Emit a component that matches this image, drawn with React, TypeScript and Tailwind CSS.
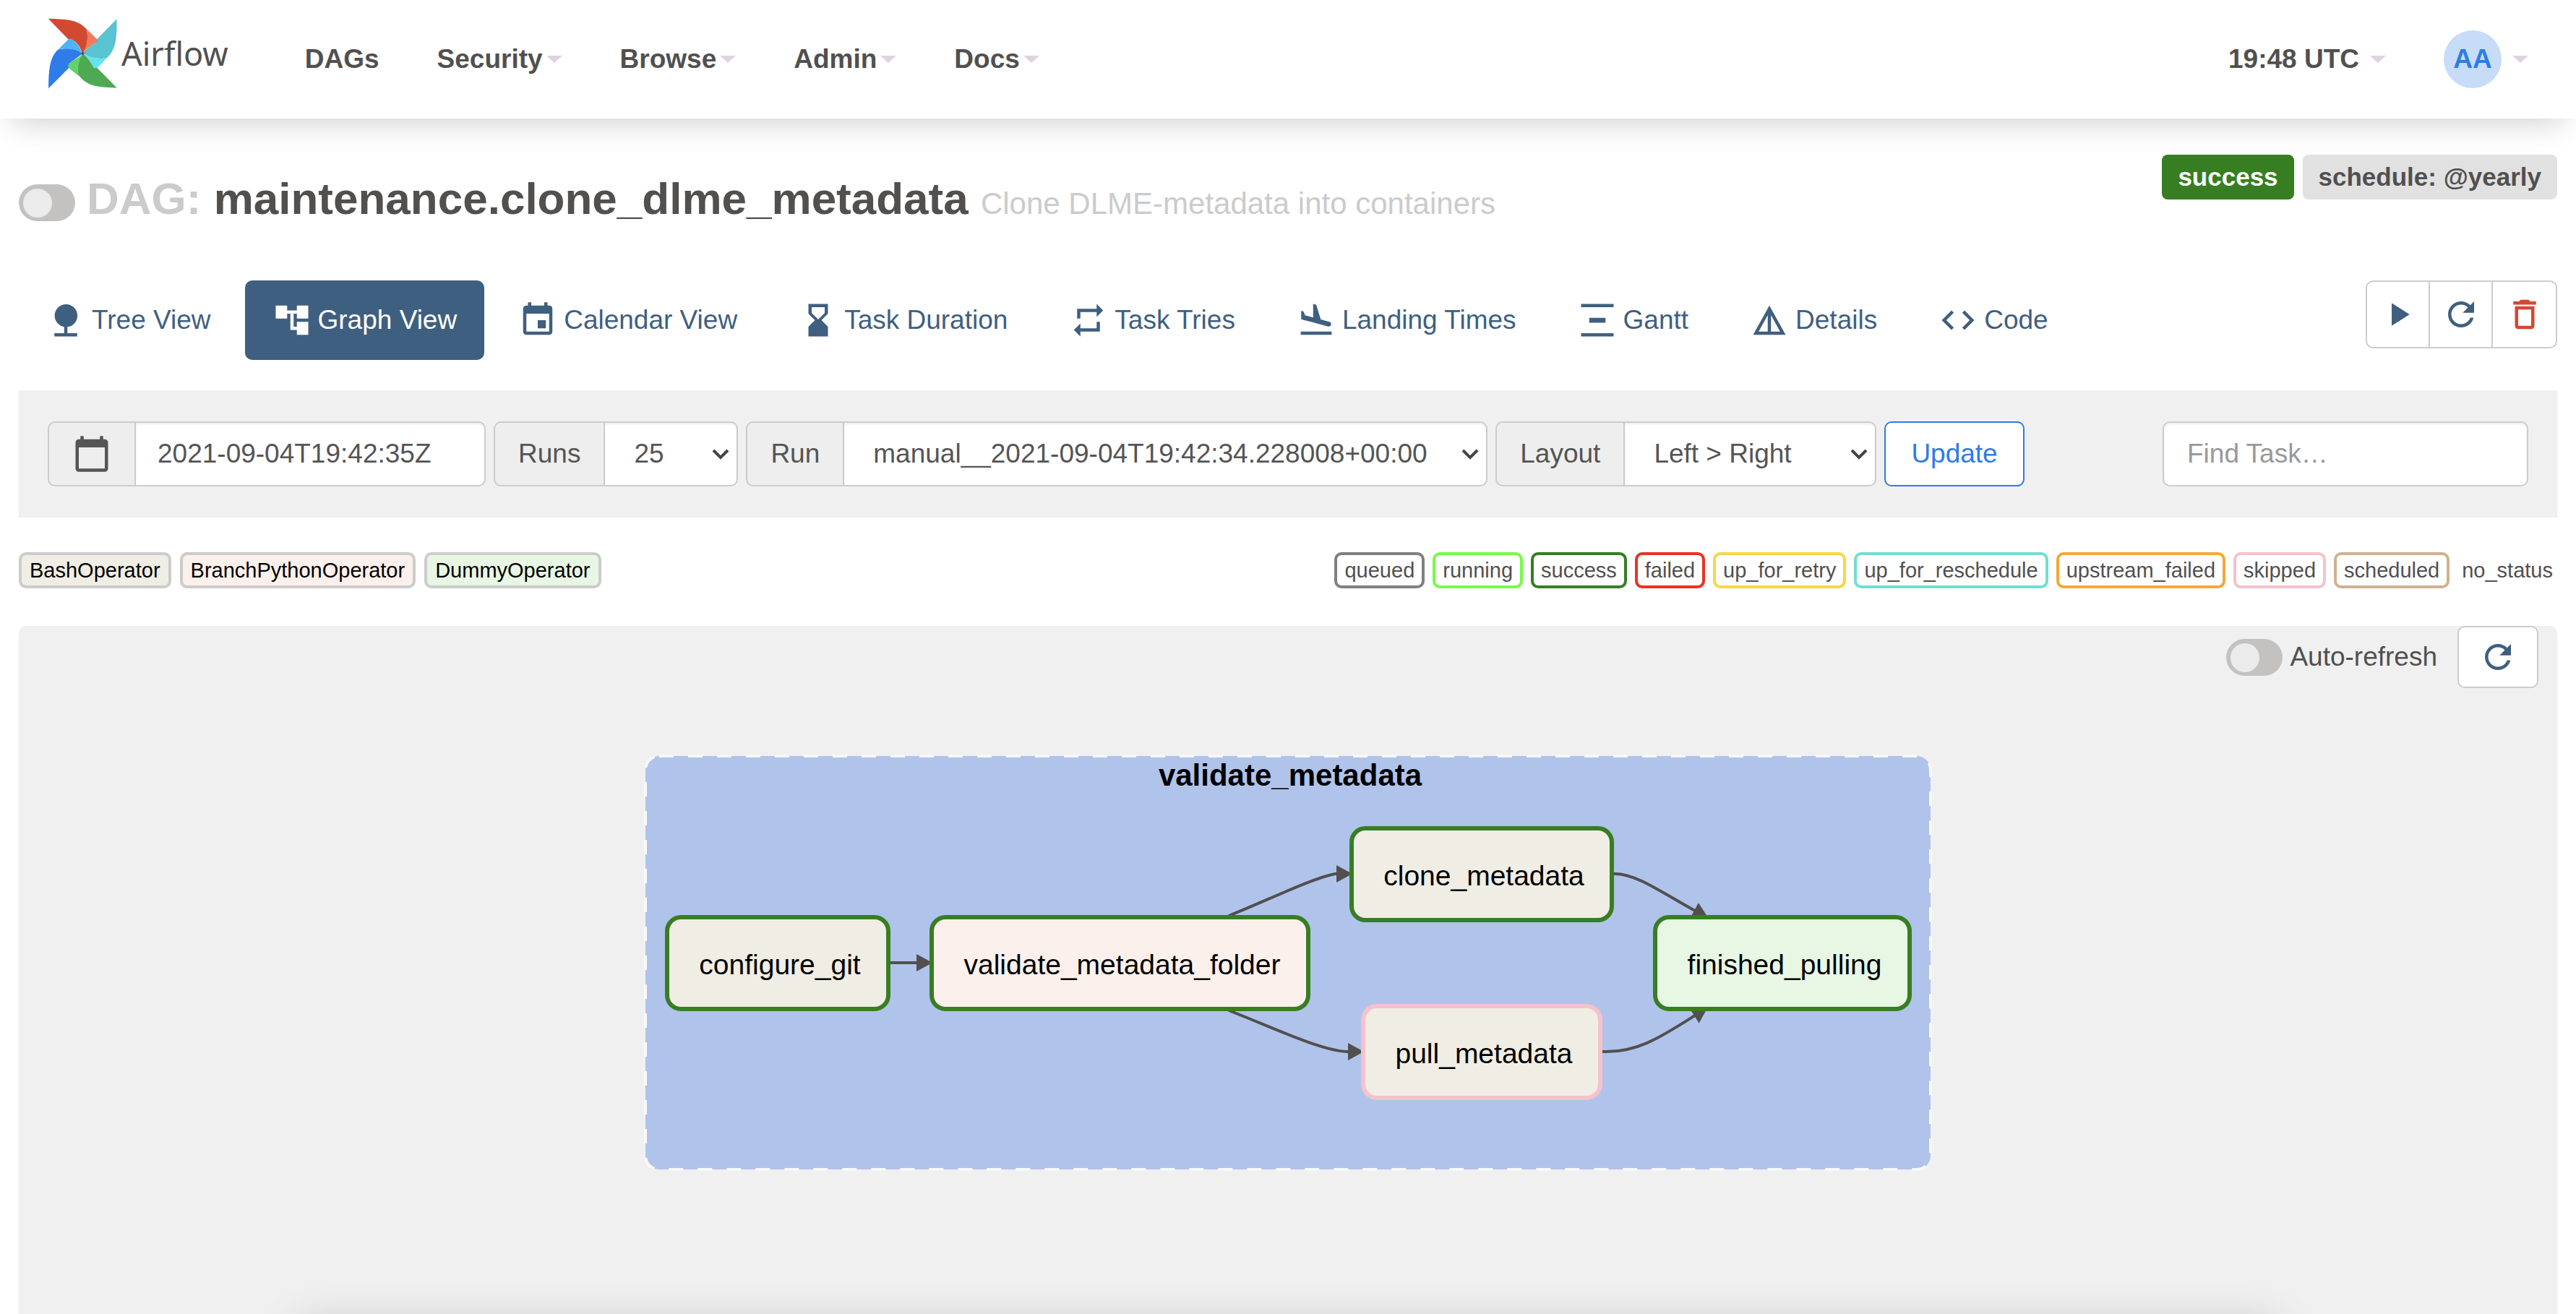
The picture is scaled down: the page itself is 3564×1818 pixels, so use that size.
import React from 'react';

const icons = {
  tree: 'M13 16.12c3.47-.41 6.17-3.36 6.17-6.95 0-3.87-3.13-7-7-7s-7 3.13-7 7c0 3.47 2.52 6.34 5.83 6.89V20H5v2h14v-2h-6v-3.88z',
  graph: 'M22 11V3h-7v3H9V3H2v8h7V8h2v10h4v3h7v-8h-7v3h-2V8h2v3z',
  event: 'M17 12h-5v5h5v-5zM16 1v2H8V1H6v2H5c-1.11 0-1.99.9-1.99 2L3 19c0 1.1.89 2 2 2h14c1.1 0 2-.9 2-2V5c0-1.1-.9-2-2-2h-1V1h-2zm3 18H5V8h14v11z',
  hourglass: 'M18 22l-.01-6L14 12l3.99-4.01L18 2H6v6l4 4-4 3.99V22h12zM8 7.5V4h8v3.5l-4 4-4-4z',
  repeat: 'M7 7h10v3l4-4-4-4v3H5v6h2V7zm10 10H7v-3l-4 4 4 4v-3h12v-6h-2v4z',
  landing:
    'M2.5 19h19v2h-19zm7.18-5.73l4.35 1.16 5.31 1.42c.8.21 1.62-.26 1.84-1.06.21-.8-.26-1.62-1.06-1.84l-5.31-1.42-2.76-9.02L10.12 2v8.28L5.15 8.95l-.93-2.32-1.45-.39v5.17l1.6.43 5.31 1.43z',
  gantt: 'M22 2v2H2V2h20zM7 10.5v3h10v-3H7zM2 20v2h20v-2H2z',
  details: 'M12 3L2 21h20L12 3zm1 5.92L18.6 19H13V8.92zm-2 0V19H5.4L11 8.92z',
  code: 'M9.4 16.6L4.8 12l4.6-4.6L8 6l-6 6 6 6 1.4-1.4zm5.2 0l4.6-4.6-4.6-4.6L16 6l6 6-6 6-1.4-1.4z',
  play: 'M8 5v14l11-7z',
  refresh:
    'M17.65 6.35C16.2 4.9 14.21 4 12 4c-4.42 0-7.99 3.58-7.99 8s3.57 8 7.99 8c3.73 0 6.84-2.55 7.73-6h-2.08c-.82 2.33-3.04 4-5.65 4-3.31 0-6-2.69-6-6s2.69-6 6-6c1.66 0 3.14.69 4.22 1.78L13 11h7V4l-2.35 2.35z',
  trash: 'M6 19c0 1.1.9 2 2 2h8c1.1 0 2-.9 2-2V7H6v12zM8 9h8v10H8V9zm7.5-5l-1-1h-5l-1 1H5v2h14V4h-3.5z',
  calendar:
    'M20 3h-1V1h-2v2H7V1H5v2H4c-1.1 0-2 .9-2 2v16c0 1.1.9 2 2 2h16c1.1 0 2-.9 2-2V5c0-1.1-.9-2-2-2zm0 18H4V8h16v13z',
};

type IconName = keyof typeof icons;

function Icon({ name }: { name: IconName }) {
  return (
    <svg viewBox="0 0 24 24" className="size-[54px] shrink-0 fill-current" aria-hidden="true">
      <path d={icons[name]} />
    </svg>
  );
}

function Caret() {
  return (
    <svg viewBox="0 0 22 10" className="h-[10px] w-[22px] fill-[#dfd2e1]" aria-hidden="true">
      <path d="M0 0h22L11 10z" />
    </svg>
  );
}

function Pinwheel() {
  return (
    <svg viewBox="24 22 288 292" className="h-[98px] w-[97px]" aria-hidden="true">
      <path fill="#2f7be9" d="M27 312L112 226Q106 214 114 208L168 168C140 146 100 144 66 152C34 180 27 230 27 312z" />
      <path fill="#4fb3f9" d="M66 152L106 112Q114 104 124 111C144 122 156 145 168 168C140 148 100 144 66 152z" />
      <path fill="#4ea953" d="M309 310L226 226L214 226C203 208 190 184 168 168C152 190 144 222 148 256L172 280C206 308 260 308 309 310z" />
      <path fill="#60d368" d="M148 258L111 228Q104 218 113 207C132 194 152 188 168 168C152 194 145 226 148 258z" />
      <path fill="#58c3d1" d="M308 26L226 110L222 124C200 136 184 146 168 168C200 188 238 192 268 186C306 152 309 100 308 26z" />
      <path fill="#66e1ef" d="M268 186L230 225Q221 233 212 225C203 208 190 182 168 168C200 188 238 192 268 186z" />
      <path fill="#d24931" d="M27 26L108 109Q117 105 126 112C146 122 158 145 168 168C186 142 194 102 183 67C146 24 90 27 27 24z" />
      <path fill="#ee7c5f" d="M183 67L225 107Q231 115 222 124C200 136 184 146 168 168C184 142 193 102 183 67z" />
      <circle cx="168" cy="168" r="6" fill="#51504f" />
    </svg>
  );
}

const tabs: { label: string; icon: IconName; active?: boolean }[] = [
  { label: 'Tree View', icon: 'tree' },
  { label: 'Graph View', icon: 'graph', active: true },
  { label: 'Calendar View', icon: 'event' },
  { label: 'Task Duration', icon: 'hourglass' },
  { label: 'Task Tries', icon: 'repeat' },
  { label: 'Landing Times', icon: 'landing' },
  { label: 'Gantt', icon: 'gantt' },
  { label: 'Details', icon: 'details' },
  { label: 'Code', icon: 'code' },
];

const operators = [
  { label: 'BashOperator', color: 'bg-[#f0ede4]' },
  { label: 'BranchPythonOperator', color: 'bg-[#fcf0ec]' },
  { label: 'DummyOperator', color: 'bg-[#e8f7e4]' },
];

const states = [
  { label: 'queued', color: 'border-[#808080]' },
  { label: 'running', color: 'border-[#76fa4c]' },
  { label: 'success', color: 'border-[#377e22]' },
  { label: 'failed', color: 'border-[#ea3323]' },
  { label: 'up_for_retry', color: 'border-[#f8d648]' },
  { label: 'up_for_reschedule', color: 'border-[#73decf]' },
  { label: 'upstream_failed', color: 'border-[#f2a83b]' },
  { label: 'skipped', color: 'border-[#f5c2cb]' },
  { label: 'scheduled', color: 'border-[#ceb38f]' },
];

const nodes = [
  { label: 'configure_git', x: 36, y: 229, w: 306, fill: '#f0ede4', stroke: '#377e22' },
  { label: 'validate_metadata_folder', x: 402, y: 229, w: 521, fill: '#fcf0ec', stroke: '#377e22' },
  { label: 'clone_metadata', x: 983, y: 106, w: 360, fill: '#f0ede4', stroke: '#377e22' },
  { label: 'pull_metadata', x: 999, y: 352, w: 328, fill: '#f0ede4', stroke: '#f5c2cb' },
  { label: 'finished_pulling', x: 1403, y: 229, w: 352, fill: '#e8f7e4', stroke: '#377e22' },
];

const edges = [
  'M345 292H382',
  'M813 227C866 206 926 176 960 169H963',
  'M813 358C868 379 938 413 976 415H979',
  'M1346 169C1376 168 1414 196 1458 220',
  'M1330 415C1378 417 1412 394 1458 365',
];

const fieldShadow = 'shadow-[inset_0_2px_3px_rgba(0,0,0,0.08)]';

function Addon({ htmlFor, children }: { htmlFor: string; children: React.ReactNode }) {
  return (
    <label
      htmlFor={htmlFor}
      className="flex items-center rounded-l-[10px] border-2 border-r-0 border-[#ccc] bg-[#eee] px-8"
    >
      {children}
    </label>
  );
}

function SelectField({ id, label, value, width }: { id: string; label: string; value: string; width: string }) {
  return (
    <div className="flex h-[90px]">
      <Addon htmlFor={id}>{label}</Addon>
      <div className={`relative ${width}`}>
        <select
          id={id}
          className={`h-full w-full appearance-none rounded-r-[10px] border-2 border-[#ccc] bg-white pl-[40px] ${fieldShadow}`}
        >
          <option>{value}</option>
        </select>
        <svg
          viewBox="0 0 24 16"
          className="pointer-events-none absolute top-[38px] right-[12px] h-[16px] w-[24px] fill-none stroke-[#444] stroke-[4]"
          aria-hidden="true"
        >
          <path d="M2 2L12 12L22 2" />
        </svg>
      </div>
    </div>
  );
}

function Toggle({ id, label }: { id: string; label?: string }) {
  return (
    <input
      id={id}
      type="checkbox"
      role="switch"
      aria-label={label}
      className="h-[51px] w-[78px] shrink-0 appearance-none rounded-full bg-[#c4c2c1] p-[6px] before:block before:size-10 before:rounded-full before:bg-[#ebebeb]"
    />
  );
}

function TaskGraph() {
  return (
    <svg viewBox="0 0 1790 584" className="mx-auto mt-[88px] w-[1790px] max-w-full" role="img" aria-label="Task graph">
      <defs>
        <marker id="arrow" viewBox="0 0 22 24" refX="1" refY="12" markerWidth="22" markerHeight="24" markerUnits="userSpaceOnUse" orient="auto">
          <path d="M0 0L22 12L0 24z" fill="#51504f" />
        </marker>
      </defs>
      <rect x="6" y="6" width="1778" height="572" rx="19" fill="#b0c3eb" stroke="#f8f8f8" strokeWidth="4" strokeDasharray="20 20" />
      <text x="898" y="47" textAnchor="middle" className="fill-black text-[42px] font-bold">
        validate_metadata
      </text>
      {edges.map((d) => (
        <path key={d} d={d} fill="none" stroke="#51504f" strokeWidth="4" markerEnd="url(#arrow)" />
      ))}
      {nodes.map((n) => (
        <g key={n.label}>
          <rect x={n.x} y={n.y} width={n.w} height="127" rx="19" fill={n.fill} stroke={n.stroke} strokeWidth="6" />
          <text x={n.x + n.w / 2 + 3} y={n.y + 79} textAnchor="middle" className="fill-black text-[39px]">
            {n.label}
          </text>
        </g>
      ))}
    </svg>
  );
}

export default function App() {
  return (
    <div className="flex min-h-screen flex-col bg-white font-['Liberation_Sans',Arial,sans-serif] text-[37px] leading-[50px] text-[#51504f]">
      <header className="relative z-10 flex h-[164px] items-center bg-white px-[66px] font-bold shadow-[0_20px_44px_-16px_rgba(0,0,0,0.2)]">
        <a href="#home" className="mr-[106px] flex items-center gap-[5px] pb-4 font-['Noto_Sans',sans-serif] text-[45px] font-normal">
          <Pinwheel />
          Airflow
        </a>
        <nav className="flex items-center gap-20">
          <a href="#dags">DAGs</a>
          {['Security', 'Browse', 'Admin', 'Docs'].map((label) => (
            <button key={label} type="button" className="flex items-center gap-[5px]">
              {label}
              <Caret />
            </button>
          ))}
        </nav>
        <div className="ml-auto flex items-center gap-20">
          <button type="button" className="flex items-center gap-[15px]">
            19:48 UTC
            <Caret />
          </button>
          <button type="button" className="flex items-center gap-[15px]">
            <span className="flex size-20 items-center justify-center rounded-full bg-[#c6dcf7] text-[#2f7be9]">AA</span>
            <Caret />
          </button>
        </div>
      </header>

      <main className="flex grow flex-col px-[26px] pt-[50px]">
        <div className="flex items-start justify-between">
          <div className="mt-[26px] flex items-center gap-4">
            <div className="flex pt-1">
              <Toggle id="pause" label="Pause or unpause DAG" />
            </div>
            <h1 className="text-[62px] leading-[70px] font-bold">
              <span className="text-[#cbcbcb]">DAG:</span> maintenance.clone_dlme_metadata{' '}
              <small className="text-[42px] font-normal text-[#cbcbcb]">Clone DLME-metadata into containers</small>
            </h1>
          </div>
          <div className="flex gap-3 text-[35px] leading-[62px] font-bold">
            <a href="#runs" className="rounded-lg bg-[#377e22] px-[22px] text-white">
              success
            </a>
            <a href="#schedule" className="rounded-lg bg-[#e1e1e1] px-[22px]">
              schedule: @yearly
            </a>
          </div>
        </div>

        <div className="mt-[71px] flex items-start justify-between text-[#3f5f80]">
          <nav className="flex gap-[9px]">
            {tabs.map((tab) => (
              <a
                key={tab.label}
                href="#view"
                aria-current={tab.active ? 'page' : undefined}
                className={`flex h-[110px] items-center gap-[9px] rounded-[10px] px-[38px] ${tab.active ? 'bg-[#3f5f80] text-white' : ''}`}
              >
                <Icon name={tab.icon} />
                {tab.label}
              </a>
            ))}
          </nav>
          <div className="flex h-[94px] divide-x-2 divide-[#ccc] rounded-[10px] border-2 border-[#ccc]">
            <button type="button" aria-label="Trigger DAG" className="flex w-[87px] items-center justify-center">
              <Icon name="play" />
            </button>
            <button type="button" aria-label="Refresh DAG" className="flex w-[87px] items-center justify-center">
              <Icon name="refresh" />
            </button>
            <button type="button" aria-label="Delete DAG" className="flex w-[87px] items-center justify-center text-[#d24931]">
              <Icon name="trash" />
            </button>
          </div>
        </div>

        <form className="mt-[42px] flex items-center justify-between bg-[#f0f0f0] px-10 py-[43px] text-[#555]">
          <div className="flex gap-[11px]">
            <div className="flex h-[90px]">
              <Addon htmlFor="base-date">
                <Icon name="calendar" />
              </Addon>
              <input
                id="base-date"
                type="text"
                aria-label="Base date"
                defaultValue="2021-09-04T19:42:35Z"
                className={`w-[486px] rounded-r-[10px] border-2 border-[#ccc] bg-white px-[30px] ${fieldShadow}`}
              />
            </div>
            <SelectField id="runs" label="Runs" value="25" width="w-[186px]" />
            <SelectField id="run" label="Run" value="manual__2021-09-04T19:42:34.228008+00:00" width="w-[892px]" />
            <SelectField id="layout" label="Layout" value="Left > Right" width="w-[350px]" />
            <button type="button" className="h-[90px] rounded-[10px] border-2 border-[#2f7be9] bg-white px-[35px] text-[#2f7be9]">
              Update
            </button>
          </div>
          <input
            type="text"
            aria-label="Find Task"
            placeholder="Find Task…"
            className={`h-[90px] w-[506px] rounded-[10px] border-2 border-[#ccc] bg-white px-[32px] placeholder:text-[#999] ${fieldShadow}`}
          />
        </form>

        <div className="mt-12 flex justify-between text-[29px] leading-[42px]">
          <div className="flex gap-3 text-black">
            {operators.map((o) => (
              <span key={o.label} className={`rounded-[10px] border-4 border-[#ccc] px-[11px] ${o.color}`}>
                {o.label}
              </span>
            ))}
          </div>
          <div className="flex gap-[11px]">
            {states.map((s) => (
              <span key={s.label} className={`rounded-[10px] border-4 px-[10px] ${s.color}`}>
                {s.label}
              </span>
            ))}
            <span className="px-[6px] py-1">no_status</span>
          </div>
        </div>

        <section className="relative mt-[52px] grow overflow-hidden rounded-t-[10px] bg-[#f0f0f0]">
          <div className="flex items-center justify-end pr-[26px]">
            <label htmlFor="auto-refresh" className="mr-[28px] flex items-center gap-[10px]">
              <Toggle id="auto-refresh" />
              Auto-refresh
            </label>
            <button
              type="button"
              aria-label="Refresh"
              className="flex h-[86px] w-[112px] items-center justify-center rounded-[10px] border-2 border-[#ccc] bg-white text-[#3f5f80]"
            >
              <Icon name="refresh" />
            </button>
          </div>
          <TaskGraph />
          <div className="absolute inset-x-[11%] -bottom-[112px] h-[100px] shadow-[0_0_60px_rgba(0,0,0,0.16)]" />
        </section>
      </main>
    </div>
  );
}
